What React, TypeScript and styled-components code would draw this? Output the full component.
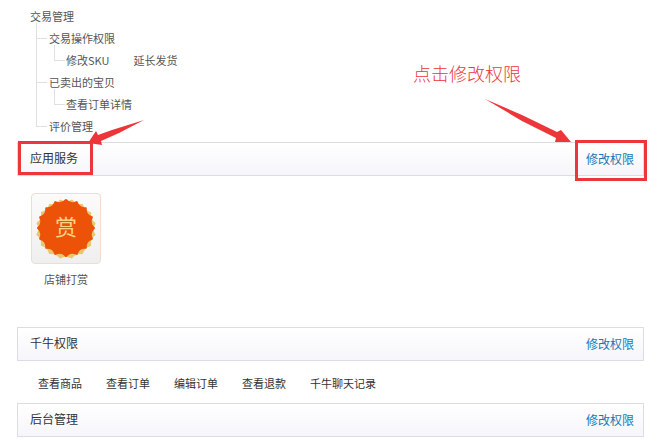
import React from "react";
import styled, { createGlobalStyle } from "styled-components";

const RED = "#ec363a";

const GlobalStyle = createGlobalStyle`
  * { box-sizing: border-box; }
  body {
    margin: 0;
    background: #fff;
    color: #555;
    font: 11px/22px "Noto Sans CJK SC", "Noto Sans", sans-serif;
  }
  ul { list-style: none; margin: 0; padding: 0; }
`;

const Page = styled.main`
  padding: 5px 14px 0 17px;
`;

const Tree = styled.ul`
  && { padding: 0 13px 5px; }
`;

const TreeNode = styled.li``;

const Branch = styled.ul<{ $level: number }>`
  && {
    margin-left: ${(p) => (p.$level === 1 ? 6 : 5)}px;
  }
`;

const BranchNode = styled.li<{ $level: number }>`
  position: relative;
  padding-left: ${(p) => (p.$level === 1 ? 13 : 12)}px;

  &::before {
    content: "";
    position: absolute;
    left: 0;
    top: -4px;
    bottom: 0;
    border-left: 1px solid #e0e0e0;
  }
  &:last-child::before { bottom: auto; height: 16px; }

  &::after {
    content: "";
    position: absolute;
    left: 0;
    top: 11px;
    width: 11px;
    border-top: 1px solid #e0e0e0;
  }
`;

const Leaves = styled.div`
  display: flex;
  gap: 24px;
`;

const SectionBar = styled.header`
  position: relative;
  display: flex;
  justify-content: space-between;
  align-items: flex-start;
  height: 34px;
  padding: 0 9px 0 12px;
  border: 1px solid #dcdde2;
  background: linear-gradient(#fff, #f6f6fb);
`;

const SectionTitle = styled.h2`
  margin: 0;
  font-size: 12px;
  font-weight: 400;
  line-height: 30px;
  color: #333;
`;

const EditLink = styled.a`
  font-size: 12px;
  line-height: 32px;
  color: #1878b4;
  text-decoration: none;
  &:hover { text-decoration: underline; }
`;

const Frame = styled.span<{ $side: "left" | "right" }>`
  position: absolute;
  border: 3px solid ${RED};
  pointer-events: none;
  ${(p) =>
    p.$side === "left"
      ? "left: 0; top: -2px; width: 75px; height: 34px;"
      : "right: -4px; top: -3px; width: 72px; height: 41px;"}
`;

const Arrow = styled.svg<{ $side: "left" | "right" }>`
  position: absolute;
  fill: ${RED};
  pointer-events: none;
  ${(p) =>
    p.$side === "left" ? "left: 70px; top: -24px;" : "right: 71px; top: -46px;"}
`;

const Hint = styled.strong`
  position: absolute;
  right: 122px;
  top: -83px;
  font-size: 18px;
  line-height: 26px;
  font-weight: 300;
  color: ${RED};
  white-space: nowrap;
`;

const Services = styled.ul`
  && {
    display: flex;
    padding: 17px 14px 37px;
  }
`;

const Service = styled.li`
  display: flex;
  flex-direction: column;
  align-items: center;
  gap: 4px;
`;

const Tile = styled.div`
  position: relative;
  display: grid;
  place-items: center;
  width: 70px;
  height: 71px;
  border: 1px solid #f3dccd;
  border-radius: 4px;
  background: linear-gradient(#fbfbfb, #efefef);
`;

const Seal = styled.svg`
  grid-area: 1 / 1;
`;

const SealText = styled.span`
  grid-area: 1 / 1;
  z-index: 1;
  padding-bottom: 8px;
  font-size: 22px;
  line-height: 24px;
  color: #ffd283;
`;

const Permissions = styled.ul`
  && {
    display: flex;
    gap: 24px;
    padding: 11px 21px 9px;
    color: #333;
  }
`;

/* Star-like outline: n points on the outer radius joined by concave arcs. */
function scallop(cx: number, cy: number, outer: number, pull: number, n: number, turn: number) {
  const at = (r: number, a: number) =>
    `${(cx + r * Math.cos(a)).toFixed(1)} ${(cy + r * Math.sin(a)).toFixed(1)}`;
  const step = (2 * Math.PI) / n;
  let d = `M${at(outer, turn)}`;
  for (let i = 0; i < n; i++) {
    const a = turn + i * step;
    d += `Q${at(pull, a + step / 2)} ${at(outer, a + step)}`;
  }
  return d + "Z";
}

function Section({ title, children }: { title: string; children?: React.ReactNode }) {
  return (
    <SectionBar>
      <SectionTitle>{title}</SectionTitle>
      <EditLink href="#edit">修改权限</EditLink>
      {children}
    </SectionBar>
  );
}

const permissions = ["查看商品", "查看订单", "编辑订单", "查看退款", "千牛聊天记录"];

export default function App() {
  return (
    <>
      <GlobalStyle />
      <Page>
        <Tree>
          <TreeNode>
            交易管理
            <Branch $level={1}>
              <BranchNode $level={1}>
                交易操作权限
                <Branch $level={2}>
                  <BranchNode $level={2}>
                    <Leaves>
                      <span>修改SKU</span>
                      <span>延长发货</span>
                    </Leaves>
                  </BranchNode>
                </Branch>
              </BranchNode>
              <BranchNode $level={1}>
                已卖出的宝贝
                <Branch $level={2}>
                  <BranchNode $level={2}>查看订单详情</BranchNode>
                </Branch>
              </BranchNode>
              <BranchNode $level={1}>评价管理</BranchNode>
            </Branch>
          </TreeNode>
        </Tree>

        <Section title="应用服务">
          <Frame $side="left" />
          <Arrow $side="left" width="58" height="28" viewBox="0 0 58 28" aria-hidden="true">
            <path d="M56 1 L24 11 L10 16 L8 12 L0 24 L14 26 L13 22 L31 14Z" />
          </Arrow>
          <Hint>点击修改权限</Hint>
          <Arrow $side="right" width="88" height="48" viewBox="0 0 88 48" aria-hidden="true">
            <path d="M1 2 L38 18 L73 35 L77 33 L87 45 L71 45 L72 41 L38 24Z" />
          </Arrow>
          <Frame $side="right" />
        </Section>
        <Services>
          <Service>
            <Tile>
              <Seal width="64" height="64" viewBox="0 0 64 64" aria-hidden="true">
                <g strokeWidth="2" strokeLinejoin="round">
                  <path d={scallop(32, 32, 29, 25, 16, 0.2)} fill="#e9c66f" stroke="#e9c66f" />
                  <path d={scallop(32, 31, 28, 23, 16, 0)} fill="#ec5208" stroke="#ec5208" />
                </g>
              </Seal>
              <SealText>赏</SealText>
            </Tile>
            <span>店铺打赏</span>
          </Service>
        </Services>

        <Section title="千牛权限" />
        <Permissions>
          {permissions.map((name) => (
            <li key={name}>{name}</li>
          ))}
        </Permissions>

        <Section title="后台管理" />
      </Page>
    </>
  );
}
